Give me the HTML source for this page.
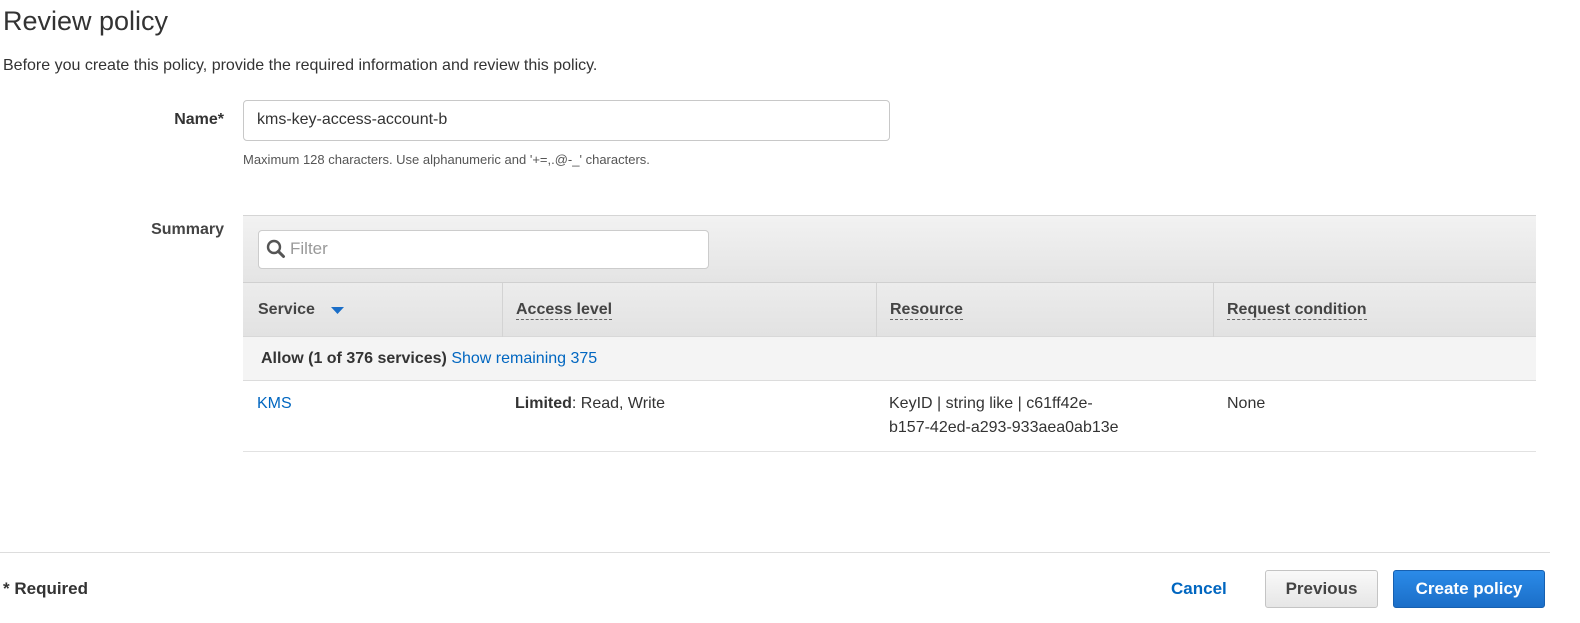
<!DOCTYPE html>
<html><head><meta charset="utf-8"><style>
*{margin:0;padding:0;box-sizing:border-box}
body{width:1580px;height:623px;background:#fff;font-family:"Liberation Sans",Arial,sans-serif;color:#444;position:relative;overflow:hidden}
.a{position:absolute;white-space:nowrap}
.b{font-weight:bold}
.link{color:#0066c0}
.dot{border-bottom:1px dashed #666;padding-bottom:1px}
</style></head><body>
<div class="a" style="left:3px;top:6px;font-size:27px;color:#333">Review policy</div>
<div class="a" style="left:3px;top:57px;font-size:16px;color:#333">Before you create this policy, provide the required information and review this policy.</div>
<div class="a b" style="left:124px;width:100px;text-align:right;top:111px;font-size:16px;color:#333">Name*</div>
<div class="a" style="left:243px;top:100px;width:647px;height:41px;border:1px solid #c8c8c8;border-radius:4px;font-size:16px;padding:10px 13px;color:#333">kms-key-access-account-b</div>
<div class="a" style="left:243px;top:152px;font-size:13px;color:#555">Maximum 128 characters. Use alphanumeric and '+=,.@-_' characters.</div>
<div class="a b" style="left:104px;width:120px;text-align:right;top:221px;font-size:16px;color:#444">Summary</div>

<div class="a" style="left:243px;top:215px;width:1293px;height:68px;background:linear-gradient(#f2f2f2,#e4e4e4);border-top:1px solid #d5d5d5;border-bottom:1px solid #d0d0d0"></div>
<div class="a" style="left:258px;top:230px;width:451px;height:39px;background:#fff;border:1px solid #ccc;border-radius:4px"></div>
<svg class="a" style="left:266px;top:239px" width="20" height="20" viewBox="0 0 20 20"><circle cx="8" cy="8" r="6" fill="none" stroke="#555" stroke-width="2.4"/><path d="M12.3 12.3L17.5 17.5" stroke="#555" stroke-width="3" stroke-linecap="round"/></svg>
<div class="a" style="left:290px;top:239px;font-size:17px;color:#999">Filter</div>

<div class="a" style="left:243px;top:283px;width:1293px;height:54px;background:linear-gradient(#ececec,#e2e2e2);border-bottom:1px solid #d8d8d8"></div>
<div class="a" style="left:502px;top:283px;width:1px;height:54px;background:#d3d3d3"></div>
<div class="a" style="left:876px;top:283px;width:1px;height:54px;background:#d3d3d3"></div>
<div class="a" style="left:1213px;top:283px;width:1px;height:54px;background:#d3d3d3"></div>
<div class="a b" style="left:258px;top:301px;font-size:16px">Service</div>
<svg class="a" style="left:331px;top:307px" width="14" height="8"><path d="M0 0H13L6.5 7Z" fill="#1a6ec8"/></svg>
<div class="a b" style="left:516px;top:301px;font-size:16px"><span class="dot">Access level</span></div>
<div class="a b" style="left:890px;top:301px;font-size:16px"><span class="dot">Resource</span></div>
<div class="a b" style="left:1227px;top:301px;font-size:16px"><span class="dot">Request condition</span></div>

<div class="a" style="left:243px;top:337px;width:1293px;height:44px;background:#f4f4f4;border-bottom:1px solid #dcdcdc"></div>
<div class="a" style="left:261px;top:350px;font-size:16px;color:#333"><b>Allow (1 of 376 services)</b> <span class="link">Show remaining 375</span></div>

<div class="a" style="left:243px;top:451px;width:1293px;height:1px;background:#e2e2e2"></div>
<div class="a link" style="left:257px;top:395px;font-size:16px">KMS</div>
<div class="a" style="left:515px;top:395px;font-size:16px;color:#333"><b>Limited</b>: Read, Write</div>
<div class="a" style="left:889px;top:392px;font-size:16px;line-height:24px;color:#333">KeyID | string like | c61ff42e-<br>b157-42ed-a293-933aea0ab13e</div>
<div class="a" style="left:1227px;top:395px;font-size:16px;color:#333">None</div>

<div class="a" style="left:0;top:552px;width:1550px;height:1px;background:#ddd"></div>
<div class="a b" style="left:3px;top:579px;font-size:17px;color:#333">* Required</div>
<div class="a b link" style="left:1171px;top:579px;font-size:17px">Cancel</div>
<div class="a b" style="left:1265px;top:570px;width:113px;height:38px;border:1px solid #c4c4c4;border-radius:3px;background:linear-gradient(#f9f9f9,#e6e6e6);font-size:17px;text-align:center;line-height:36px;color:#444">Previous</div>
<div class="a b" style="left:1393px;top:570px;width:152px;height:38px;border:1px solid #1760b0;border-radius:3px;background:linear-gradient(#2b8be8,#1b6ec8);font-size:17px;text-align:center;line-height:36px;color:#fff">Create policy</div>
</body></html>
